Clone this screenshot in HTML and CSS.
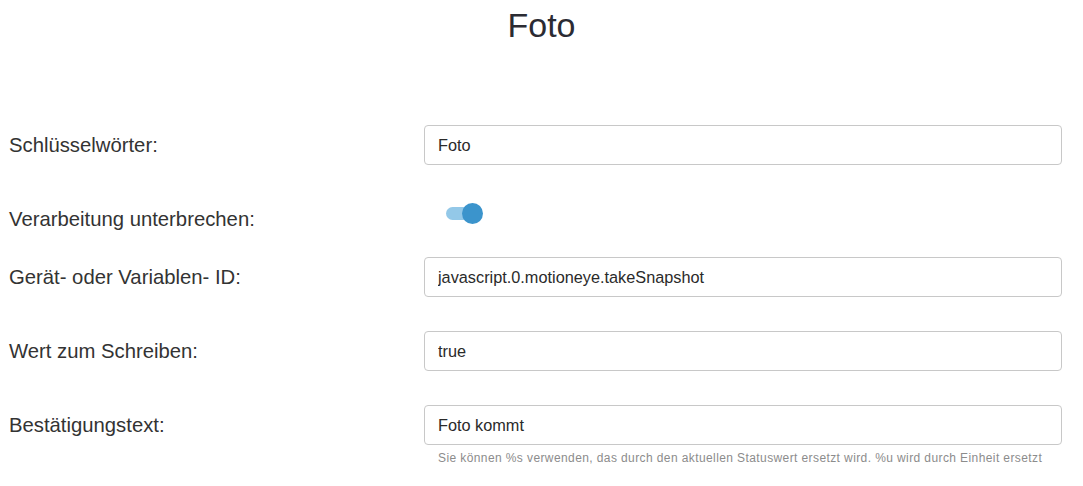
FILE: index.html
```html
<!DOCTYPE html>
<html lang="de">
<head>
    <meta charset="UTF-8">
    <title>Foto</title>
    <link rel="stylesheet" href="styles.css">
</head>
<body>
    <h1 class="title">Foto</h1>

    <!-- Einstellungen -->
    <form class="settings">
        <div class="row">
            <label class="label" for="keywords">Schlüsselwörter:</label>
            <input class="field" type="text" id="keywords" value="Foto">
        </div>

        <div class="row row-switch">
            <label class="label">Verarbeitung unterbrechen:</label>
            <span class="switch">
                <span class="switch-track"></span>
                <span class="switch-knob"></span>
            </span>
        </div>

        <div class="row">
            <label class="label" for="device">Gerät- oder Variablen- ID:</label>
            <input class="field" type="text" id="device" value="javascript.0.motioneye.takeSnapshot">
        </div>

        <div class="row">
            <label class="label" for="value">Wert zum Schreiben:</label>
            <input class="field" type="text" id="value" value="true">
        </div>

        <div class="row row-last">
            <label class="label" for="ack">Bestätigungstext:</label>
            <div class="field-wrap">
                <input class="field" type="text" id="ack" value="Foto kommt">
                <p class="hint">Sie können %s verwenden, das durch den aktuellen Statuswert ersetzt wird. %u wird durch Einheit ersetzt</p>
            </div>
        </div>
    </form>
</body>
</html>
```

FILE: styles.css
```css
body {
    font-family: "Liberation Sans", Arial, sans-serif;
    background-color: #fff;
    color: #333;
    margin: 0;
    padding: 0 21px 0 9px;
}
.title {
    font-size: 34px;
    font-weight: normal;
    line-height: 39px;
    text-align: center;
    color: #2b2b33;
    margin: 6px 0 0 0;
    padding-left: 12px;
}
.settings {
    margin-top: 80px;
}
.row {
    display: flex;
    align-items: center;
    min-height: 40px;
    margin-bottom: 34px;
}
.label {
    width: 415px;
    flex-shrink: 0;
    font-size: 20.3px;
    line-height: 28px;
    color: #333;
}
.field {
    flex: 1;
    width: 100%;
    height: 40px;
    box-sizing: border-box;
    padding: 0 13px;
    border: 1px solid #c8c8c8;
    border-radius: 4px;
    font-family: "Liberation Sans", Arial, sans-serif;
    font-size: 16.3px;
    color: #2a2a2a;
    background-color: #fff;
    outline: none;
}
.row-switch {
    align-items: flex-start;
    min-height: 0;
    margin-bottom: 24px;
}
.row-switch .label {
    margin-top: 6px;
}
.switch {
    display: flex;
    align-items: center;
    margin: 4px 0 0 22px;
    width: 38px;
    height: 21px;
}
.switch-track {
    width: 28px;
    height: 13px;
    border-radius: 7px;
    background-color: #93c8e8;
}
.switch-knob {
    width: 21px;
    height: 21px;
    border-radius: 50%;
    background-color: #3b94cc;
    margin-left: -12px;
}
.row-last {
    align-items: flex-start;
    margin-bottom: 0;
}
.row-last .label {
    margin-top: 6px;
}
.field-wrap {
    flex: 1;
}
.hint {
    margin: 5px 0 0 14px;
    font-size: 12px;
    line-height: 16px;
    letter-spacing: 0.4px;
    color: #8c8c8c;
}
```
